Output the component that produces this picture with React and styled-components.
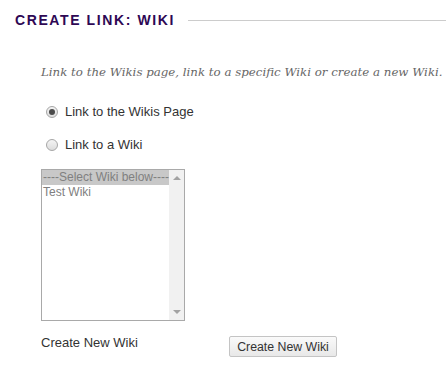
import React, { useState } from "react";
import styled, { createGlobalStyle } from "styled-components";

const GlobalStyle = createGlobalStyle`
  body {
    margin: 0;
    background: #fff;
    font-family: "Liberation Sans", Arial, sans-serif;
  }
`;

const Page = styled.div`
  width: 446px;
  height: 365px;
  overflow: hidden;
  padding-top: 12px;
  box-sizing: border-box;
`;

const TitleRow = styled.div`
  display: flex;
  align-items: center;
  gap: 13px;
  padding-left: 15px;
`;

const Title = styled.h1`
  margin: 0;
  font-size: 14px;
  font-weight: bold;
  letter-spacing: 1.6px;
  color: #2e0854;
  line-height: 16px;
  white-space: nowrap;
`;

const Rule = styled.div`
  flex: 1;
  border-top: 1px solid #cccccc;
  margin-top: 1px;
`;

const Body = styled.div`
  padding-left: 41px;
`;

const Intro = styled.p`
  margin: 35px 0 0;
  font-family: "DejaVu Serif", Georgia, serif;
  font-style: italic;
  font-size: 11.8px;
  color: #666666;
  line-height: 18px;
  white-space: nowrap;
`;

const RadioGroup = styled.div`
  display: flex;
  flex-direction: column;
  gap: 15px;
  margin-top: 22px;
`;

const RadioRow = styled.label`
  display: flex;
  align-items: center;
  gap: 7px;
  font-size: 13px;
  color: #333333;
  line-height: 18px;
  cursor: pointer;
`;

const RadioDot = styled.span`
  width: 12px;
  height: 12px;
  margin-left: 5px;
  border-radius: 50%;
  border: 1px solid #a6a6a6;
  background: linear-gradient(#f4f4f4, #dcdcdc);
  display: flex;
  align-items: center;
  justify-content: center;
  box-sizing: border-box;

  &::after {
    content: "";
    width: 6px;
    height: 6px;
    border-radius: 50%;
    background: ${(p) => (p.$checked ? "#4a4a4a" : "transparent")};
  }
`;

const ListBox = styled.div`
  margin-top: 15px;
  width: 144px;
  height: 152px;
  border: 1px solid #a9a9a9;
  box-sizing: border-box;
  display: flex;
`;

const Options = styled.div`
  flex: 1;
  font-size: 12px;
  line-height: 15px;
  color: #808080;
`;

const Option = styled.div`
  padding-left: 1px;
  white-space: nowrap;
  overflow: hidden;
  background: ${(p) => (p.$selected ? "#c8c8c8" : "transparent")};
`;

const ScrollBar = styled.div`
  width: 17px;
  background: #f1f1f1;
  display: flex;
  flex-direction: column;
  justify-content: space-between;
  align-items: center;
  padding: 6px 0;
  box-sizing: border-box;
`;

const Arrow = styled.span`
  width: 0;
  height: 0;
  border-left: 4px solid transparent;
  border-right: 4px solid transparent;
  ${(p) =>
    p.$up
      ? "border-bottom: 4px solid #a3a3a3;"
      : "border-top: 4px solid #a3a3a3;"}
`;

const CreateRow = styled.div`
  display: flex;
  align-items: flex-start;
  margin-top: 14px;
`;

const CreateLabel = styled.span`
  font-size: 13px;
  line-height: 16px;
  color: #333333;
  width: 188px;
`;

const Button = styled.button`
  font-family: "Liberation Sans", Arial, sans-serif;
  font-size: 12.3px;
  color: #333333;
  height: 21px;
  width: 108px;
  margin-top: 1px;
  padding: 0;
  border: 1px solid #c4c4c4;
  border-radius: 2px;
  background: linear-gradient(#fafafa, #e8e8e8);
  cursor: pointer;
`;

export default function App() {
  const [choice, setChoice] = useState("page");
  const wikis = ["----Select Wiki below----", "Test Wiki"];

  return (
    <Page>
      <GlobalStyle />
      <TitleRow>
        <Title>CREATE LINK: WIKI</Title>
        <Rule />
      </TitleRow>
      <Body>
        <Intro>
          Link to the Wikis page, link to a specific Wiki or create a new Wiki.
        </Intro>
        <RadioGroup>
          <RadioRow onClick={() => setChoice("page")}>
            <RadioDot $checked={choice === "page"} />
            Link to the Wikis Page
          </RadioRow>
          <RadioRow onClick={() => setChoice("wiki")}>
            <RadioDot $checked={choice === "wiki"} />
            Link to a Wiki
          </RadioRow>
        </RadioGroup>
        <ListBox>
          <Options>
            {wikis.map((w, i) => (
              <Option key={w} $selected={i === 0}>
                {w}
              </Option>
            ))}
          </Options>
          <ScrollBar>
            <Arrow $up />
            <Arrow />
          </ScrollBar>
        </ListBox>
        <CreateRow>
          <CreateLabel>Create New Wiki</CreateLabel>
          <Button>Create New Wiki</Button>
        </CreateRow>
      </Body>
    </Page>
  );
}
